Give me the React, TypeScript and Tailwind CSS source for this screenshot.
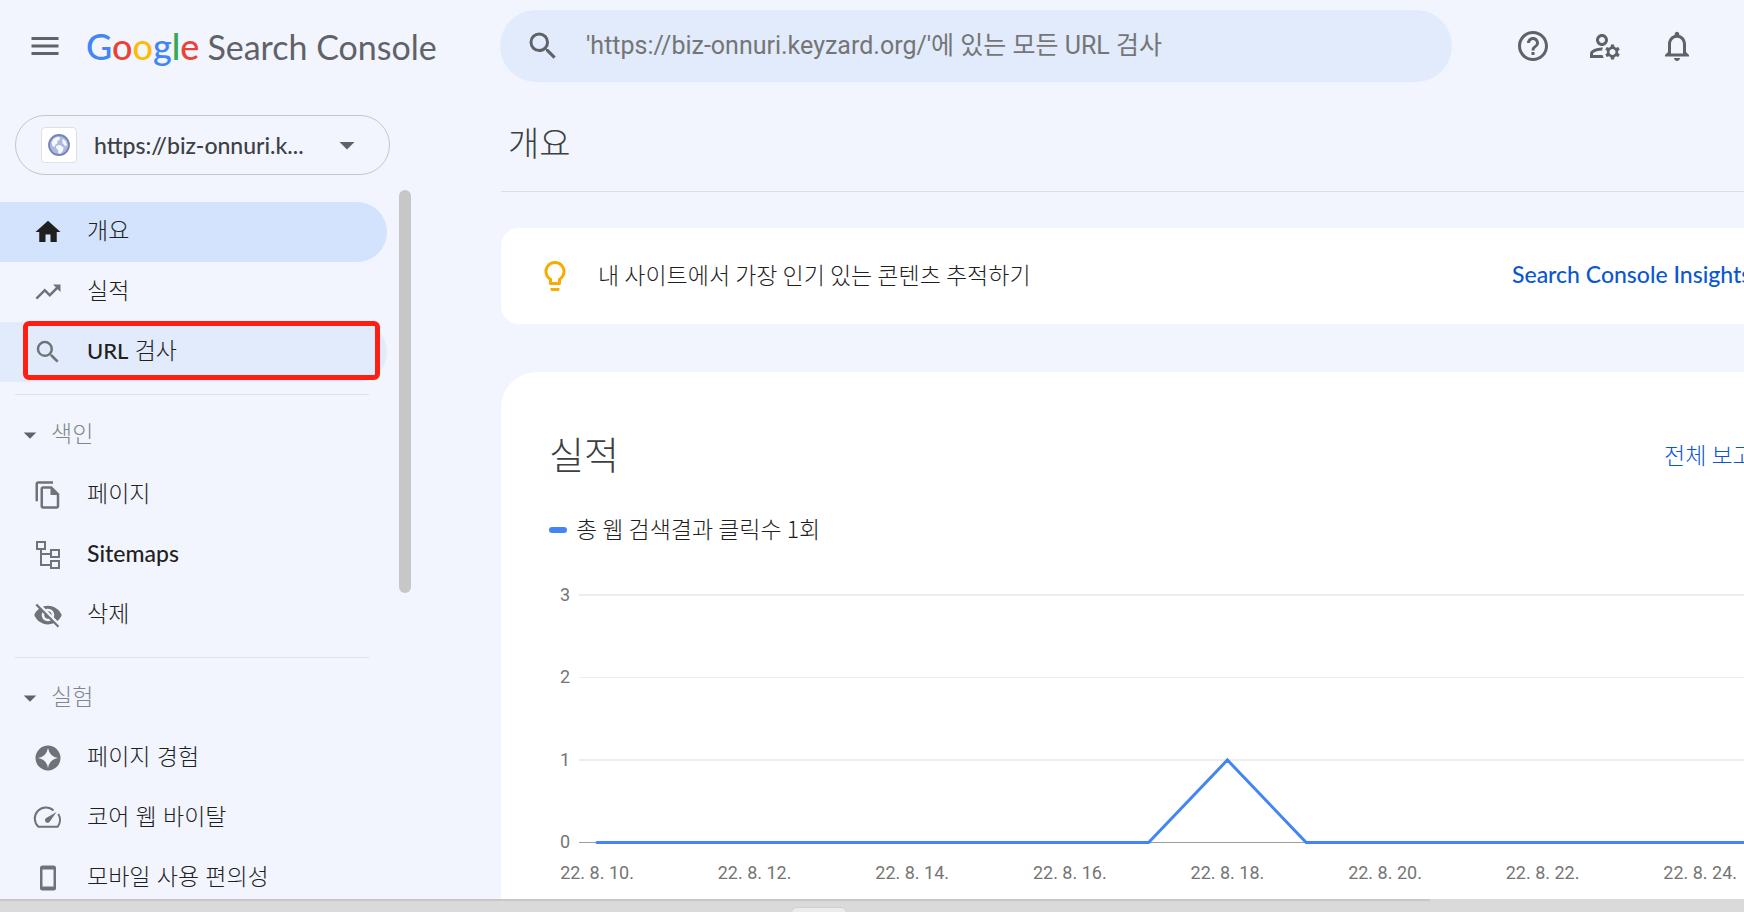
import type { ComponentType, ReactNode } from "react";
import {
  MdArrowDropDown,
  MdHelpOutline,
  MdHome,
  MdMenu,
  MdNotificationsNone,
  MdOutlineFileCopy,
  MdOutlineLightbulb,
  MdOutlineManageAccounts,
  MdSearch,
  MdTrendingUp,
  MdVisibilityOff,
} from "react-icons/md";

type IconProps = { className?: string };
type Icon = ComponentType<IconProps>;
type Item = { id: string; icon: Icon; label: ReactNode };

function SitemapIcon({ className }: IconProps) {
  return (
    <svg viewBox="0 0 30 30" className={className} fill="none" stroke="currentColor" strokeWidth="2" aria-hidden="true">
      <rect x="4" y="2" width="8" height="7" />
      <rect x="18" y="10" width="8" height="7" />
      <rect x="18" y="21" width="8" height="7" />
      <path d="M8 9v16h10M8 14h10" />
    </svg>
  );
}

function SparkIcon({ className }: IconProps) {
  return (
    <svg viewBox="0 0 24 24" className={className} fill="currentColor" aria-hidden="true">
      <path
        fillRule="evenodd"
        d="M12 2a10 10 0 1 0 0 20 10 10 0 0 0 0-20Zm0 2q1.200 6.800 8 8-6.800 1.200-8 8-1.200-6.800-8-8 6.800-1.200 8-8Z"
      />
    </svg>
  );
}

function GaugeIcon({ className }: IconProps) {
  return (
    <svg viewBox="0 0 30 30" className={className} aria-hidden="true">
      <path
        d="M20.500 7.400A11 11 0 0 0 5.400 23.800H24.600A11 11 0 0 0 25.300 11"
        fill="none"
        stroke="currentColor"
        strokeWidth="2"
        strokeLinejoin="round"
      />
      <path d="M23.500 9 17 18.200a2.600 2.600 0 1 1-3.800-3.200Z" fill="currentColor" />
    </svg>
  );
}

function PhoneIcon({ className }: IconProps) {
  return (
    <svg viewBox="0 0 30 30" className={className} fill="currentColor" aria-hidden="true">
      <path
        fillRule="evenodd"
        d="M9.500 2.500h11a2.500 2.500 0 0 1 2.500 2.500v20a2.500 2.500 0 0 1-2.500 2.500h-11a2.500 2.500 0 0 1-2.500-2.500v-20a2.500 2.500 0 0 1 2.500-2.500ZM9.500 6.500v17h11v-17Z"
      />
    </svg>
  );
}

function GlobeIcon({ className }: IconProps) {
  return (
    <svg viewBox="0 0 24 24" className={className} aria-hidden="true">
      <circle cx="12" cy="12" r="10" fill="#aeb9de" stroke="#7683bb" strokeWidth="1.800" />
      <path d="M4.500 9.500 7 5.500l3.500-1.800 2.500.8-.5 2.500-2.500 1 .8 2-2.300 1.500-1 2.500-2-1Z" fill="#f6f8ff" />
      <path d="M9.500 12.500l3.500-.5 3.500 2.500-.5 3-2.500 3.300-2-.3-.5-3.500-2-2Z" fill="#f6f8ff" />
      <path d="M15.500 5.500l3.500 3 1 4-2 .5-2.500-3Z" fill="#f6f8ff" />
    </svg>
  );
}

function NavItem({
  icon: ItemIcon,
  label,
  tone = "",
  iconTone = "text-[#6f7276]",
}: {
  icon: Icon;
  label: ReactNode;
  tone?: string;
  iconTone?: string;
}) {
  return (
    <li>
      <a
        href="#"
        className={`mr-8 flex h-[60px] items-center gap-6 rounded-r-full pl-[33px] text-[#1f1f1f] ${tone}`}
      >
        <ItemIcon className={`size-[30px] shrink-0 ${iconTone}`} />
        <span className="pb-[3px] whitespace-nowrap">{label}</span>
      </a>
    </li>
  );
}

function NavSection({ title, items }: { title: string; items: Item[] }) {
  return (
    <section className="mt-3 shrink-0">
      <hr className="mr-[50px] ml-[15px] border-[#dfe1e5]" />
      <button type="button" className="mt-[10px] flex h-[60px] items-center gap-1.5 pl-[15px] text-[#80868b]">
        <MdArrowDropDown className="size-[30px] text-[#5f6368]" />
        <span className="pb-[3px]">{title}</span>
      </button>
      <ul>
        {items.map(({ id, icon, label }) => (
          <NavItem key={id} icon={icon} label={label} />
        ))}
      </ul>
    </section>
  );
}

function Sidebar() {
  return (
    <aside className="relative flex w-[419px] shrink-0 flex-col pt-[23px] font-['Lato','Noto_Sans_CJK_KR',sans-serif] text-[23px] font-light">
      <button
        type="button"
        className="mr-[29px] ml-[15px] flex h-[60px] shrink-0 items-center rounded-full border border-[#c4c7c5] pr-6 pl-[25px] text-[#3c4043]"
      >
        <span className="flex size-9 shrink-0 items-center justify-center rounded-sm border border-[#e0e0e0] bg-white">
          <GlobeIcon className="size-6" />
        </span>
        <span className="ml-[17px] flex-1 text-left font-medium whitespace-nowrap">https://biz-onnuri.k...</span>
        <MdArrowDropDown className="size-9 text-[#5f6368]" />
      </button>
      <nav aria-label="Search Console" className="mt-[27px]">
        <ul>
          <NavItem icon={MdHome} label="개요" tone="bg-[#d3e3fd]" iconTone="text-[#1f1f1f]" />
          <NavItem icon={MdTrendingUp} label="실적" />
          <NavItem
            icon={MdSearch}
            label={
              <>
                <span className="text-[22px] font-medium">URL</span> 검사
              </>
            }
            tone="bg-[#e1ebfc]"
          />
        </ul>
        <NavSection
          title="색인"
          items={[
            { id: "pages", icon: MdOutlineFileCopy, label: "페이지" },
            { id: "sitemaps", icon: SitemapIcon, label: <span className="font-medium">Sitemaps</span> },
            { id: "removals", icon: MdVisibilityOff, label: "삭제" },
          ]}
        />
        <NavSection
          title="실험"
          items={[
            { id: "experience", icon: SparkIcon, label: "페이지 경험" },
            { id: "vitals", icon: GaugeIcon, label: "코어 웹 바이탈" },
            { id: "mobile", icon: PhoneIcon, label: "모바일 사용 편의성" },
          ]}
        />
      </nav>
      <div className="pointer-events-none absolute top-[229px] left-[23px] h-[59px] w-[357px] rounded-md border-5 border-[#ff1e12]" />
      <div className="absolute top-[98px] right-2 h-[403px] w-3 rounded-full bg-[#c7c7c7]" />
    </aside>
  );
}

function Header() {
  return (
    <header className="flex h-[92px] shrink-0 items-center text-[#5f6368]">
      <div className="flex w-[500px] shrink-0 items-center pl-[27px]">
        <button type="button" aria-label="메뉴">
          <MdMenu className="size-9" />
        </button>
        <a href="#" className="ml-[23px] flex items-baseline gap-2 font-['Lato',sans-serif] whitespace-nowrap">
          <span className="text-4xl font-medium">
            <span className="text-[#4285f4]">G</span>
            <span className="text-[#ea4335]">o</span>
            <span className="text-[#fbbc05]">o</span>
            <span className="text-[#4285f4]">g</span>
            <span className="text-[#34a853]">l</span>
            <span className="text-[#ea4335]">e</span>
          </span>
          <span className="text-[34px]">Search Console</span>
        </a>
      </div>
      <label className="flex h-[72px] min-w-0 flex-1 items-center gap-[25px] rounded-full bg-[#e1ebfc] pl-[25px]">
        <MdSearch className="size-9 shrink-0" />
        <input
          type="search"
          aria-label="URL 검사"
          placeholder="'https://biz-onnuri.keyzard.org/'에 있는 모든 URL 검사"
          className="w-full min-w-0 bg-transparent font-['Roboto','Noto_Sans_CJK_KR',sans-serif] text-[25px] outline-none placeholder:text-[#757575]"
        />
      </label>
      <div className="flex shrink-0 items-center gap-9 pr-[49px] pl-[63px]">
        <button type="button" aria-label="도움말">
          <MdHelpOutline className="size-9" />
        </button>
        <button type="button" aria-label="사용자 설정">
          <MdOutlineManageAccounts className="size-9" />
        </button>
        <button type="button" aria-label="알림">
          <MdNotificationsNone className="size-9" />
        </button>
      </div>
    </header>
  );
}

const clicks = [0, 0, 0, 0, 0, 0, 0, 0, 1, 0, 0, 0, 0, 0, 0, 0, 0, 0, 0, 0];
const firstDay = 10;
const originX = 48;
const dayWidth = 78.8;
const baseY = 272;
const unitY = 82.5;

function Chart() {
  const points = clicks.map((n, i) => `${originX + i * dayWidth},${baseY + 0.5 - n * unitY}`).join(" ");
  return (
    <svg
      className="block h-[340px] w-full overflow-hidden font-['Roboto',sans-serif] text-lg font-normal"
      role="img"
      aria-label="총 웹 검색결과 클릭수"
    >
      {[3, 2, 1, 0].map((n) => (
        <g key={n}>
          <text x="11" y={baseY - n * unitY + 6} fill="#757575">
            {n}
          </text>
          <rect
            x="30"
            y={Math.floor(baseY - n * unitY)}
            width="100%"
            height={n % 2 ? 2 : 1}
            fill={n ? "#ededed" : "#9e9e9e"}
          />
        </g>
      ))}
      <polyline points={points} fill="none" stroke="#4285f4" strokeWidth="3" strokeLinecap="round" />
      {[0, 2, 4, 6, 8, 10, 12, 14].map((i) => (
        <text key={i} x={originX + i * dayWidth} y={baseY + 37} textAnchor="middle" fill="#757575">
          {`22. 8. ${firstDay + i}.`}
        </text>
      ))}
    </svg>
  );
}

function Main() {
  return (
    <main className="ml-[82px] flex min-w-0 flex-1 flex-col font-['Noto_Sans_CJK_KR',sans-serif] text-[23px] font-light text-[#1f1f1f]">
      <h1 className="flex h-[100px] shrink-0 items-center border-b border-[#dadfdf] pl-[7px] text-[34px] text-[#3c4043]">
        개요
      </h1>
      <section className="mt-9 flex h-24 shrink-0 items-center rounded-l-[18px] bg-white pl-9">
        <MdOutlineLightbulb className="size-9 text-[#f9ab00]" />
        <p className="ml-[25px] flex-1 pb-1 whitespace-nowrap">내 사이트에서 가장 인기 있는 콘텐츠 추적하기</p>
        <a
          href="#"
          className="w-[232px] shrink-0 pb-[3px] font-['Lato',sans-serif] font-medium whitespace-nowrap text-[#0b57d0]"
        >
          Search Console Insights
        </a>
      </section>
      <section className="mt-12 shrink-0 rounded-tl-[36px] bg-white pt-[54px]">
        <div className="flex h-[60px] items-center justify-between pl-12">
          <h2 className="pb-2 text-[38px] text-[#3c4043]">실적</h2>
          <a href="#" className="w-20 pb-[3px] whitespace-nowrap text-[#0b57d0]">
            전체 보고
          </a>
        </div>
        <p className="mt-6 flex h-10 items-center gap-[9px] pl-12">
          <span className="h-[6px] w-[18px] rounded-full bg-[#4285f4]" />
          <span className="pb-[3px]">총 웹 검색결과 클릭수 1회</span>
        </p>
        <div className="mt-5 pl-12">
          <Chart />
        </div>
      </section>
    </main>
  );
}

export default function App() {
  return (
    <div className="flex h-screen flex-col overflow-hidden bg-[#f2f5fd]">
      <Header />
      <div className="flex min-h-0 flex-1 overflow-hidden">
        <Sidebar />
        <Main />
      </div>
      <footer className="relative h-[13px] shrink-0 overflow-hidden bg-[#dadadb]">
        <div className="h-[2px] w-[82%] bg-[#c7c7c9]" />
        <div className="absolute top-2 left-[791px] h-3 w-[56px] rounded-md border border-[#cfcfd1] bg-[#ececed]" />
      </footer>
    </div>
  );
}
